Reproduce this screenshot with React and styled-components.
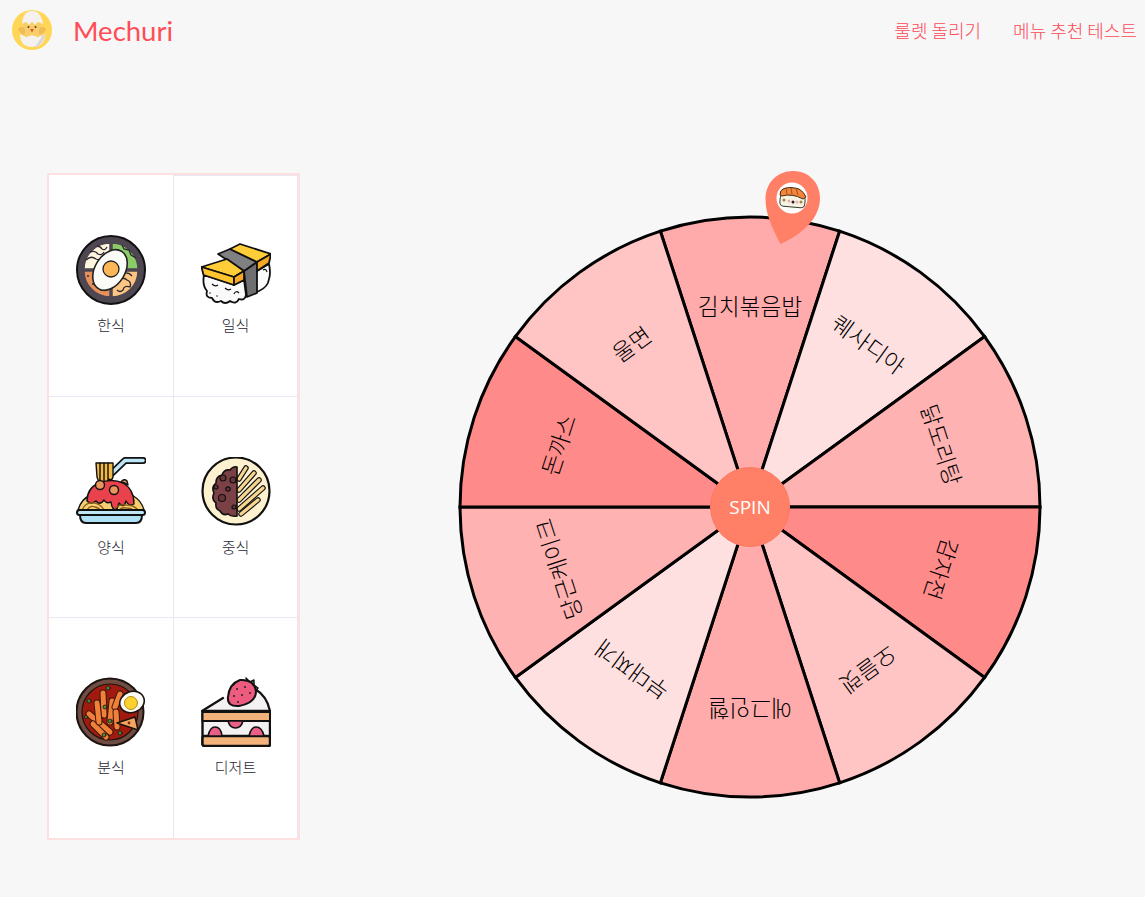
import styled, { createGlobalStyle } from "styled-components";

const GlobalStyle = createGlobalStyle`
  html, body {
    margin: 0;
    padding: 0;
    background: #f7f7f7;
  }
  body {
    font-family: "Noto Sans CJK KR", "Noto Sans", sans-serif;
  }
`;

const Page = styled.div`
  width: 1145px;
  height: 897px;
  overflow: hidden;
`;

const Header = styled.header`
  height: 60px;
  padding: 0 8px 0 12px;
  box-sizing: border-box;
  display: flex;
  align-items: center;
  justify-content: space-between;
`;

const Brand = styled.div`
  display: flex;
  align-items: center;
  gap: 21px;
`;

const BrandName = styled.span`
  font-family: "Lato", sans-serif;
  font-size: 27.5px;
  color: #ff4d58;
`;

const Nav = styled.nav`
  display: flex;
  gap: 32px;
`;

const NavLink = styled.a`
  font-size: 18px;
  font-weight: 300;
  color: #ff4757;
`;

const Main = styled.main`
  display: flex;
  align-items: center;
  gap: 157px;
  padding: 113px 0 0 47px;
`;

const Panel = styled.section`
  width: 253px;
  height: 667px;
  box-sizing: border-box;
  border: 2px solid #ffe0e0;
  background: #fff;
  display: grid;
  grid-template-columns: 125px 124px;
  grid-template-rows: 222px 221px 220px;
`;

const Category = styled.div`
  box-sizing: border-box;
  padding-top: 60px;
  display: flex;
  flex-direction: column;
  align-items: center;
  gap: 10px;
  border-bottom: 1px solid #e6e9f2;
  &:nth-child(odd) {
    border-right: 1px solid #e6e9f2;
  }
  &:nth-child(n + 5) {
    border-bottom: none;
    padding-top: 59px;
  }
  &:nth-child(2) {
    border-top: 1px solid #e6e9f2;
    padding-top: 59px;
  }
  &:nth-child(even) {
    border-right: 1px solid #e6e9f2;
  }
`;

const CategoryLabel = styled.span`
  font-size: 15px;
  line-height: 20px;
  font-weight: 300;
  color: #1f2733;
`;

const WheelBox = styled.div`
  position: relative;
  width: 586px;
  height: 586px;
`;

const WheelLabel = styled.text`
  font-family: "Noto Sans CJK KR", sans-serif;
  font-size: 22.7px;
  font-weight: 300;
  fill: #000;
  text-anchor: middle;
  dominant-baseline: central;
`;

const SpinButton = styled.button`
  position: absolute;
  left: 253px;
  top: 253px;
  width: 80px;
  height: 80px;
  padding: 0;
  border: 1px solid #fb7a62;
  border-radius: 50%;
  background: #ff8066;
  color: #fff;
  font-family: "Open Sans", sans-serif;
  font-size: 19px;
`;

const PinMark = styled.svg`
  position: absolute;
  left: 306px;
  top: -45px;
`;

const Logo = () => (
  <svg width="40" height="40" viewBox="0 0 40 40">
    <circle cx="20" cy="20" r="20" fill="#ffd655" />
    <path d="M10 14 Q11 1 20 1 Q29 1 31 14 L26 12 L23 15 L20 12 L17 15 L14 12 Z" fill="#f4f1ee" />
    <path d="M8 24 Q8 37 20 37 Q33 37 33 24 L26 27 L20 25 L14 27 Z" fill="#f4f1ee" />
    <path d="M27 31 Q25 36 20 37 Q31 37 33 24 L30 25 Q30 28 27 31 Z" fill="#d9d6d4" />
    <path d="M11 14 L14 12 L17 15 L20 12 L23 15 L26 12 L29 14 L30 24 L26 27 L20 25 L14 27 L10 24 Z" fill="#f9cd69" />
    <path d="M6 19 Q9 15 13 19 L13 24 Q9 26 6 19 Z M34 19 Q31 15 27 19 L27 24 Q31 26 34 19 Z" fill="#f1bb55" />
    <circle cx="16.5" cy="17" r="1" fill="#5a3b22" />
    <circle cx="23.5" cy="17" r="1" fill="#5a3b22" />
    <path d="M18 19 L22 19 L20 22.5 Z" fill="#e4572e" />
  </svg>
);

const BibimbapIcon = () => (
  <svg width="70" height="70" viewBox="0 0 70 70">
    <circle cx="35" cy="35" r="34" fill="#4e4650" stroke="#111" strokeWidth="2" />
    <g stroke="#4e4650" strokeWidth="1.5">
      <path d="M34 34 L8 34 A26 26 0 0 1 34 8 Z" fill="#fff6dd" />
      <path d="M36 34 L36 8 A26 26 0 0 1 62 34 Z" fill="#8bcb68" />
      <path d="M34 36 L34 62 A26 26 0 0 1 8 36 Z" fill="#e6905c" />
      <path d="M36 36 L62 36 A26 26 0 0 1 36 62 Z" fill="#fdc582" />
    </g>
    <g fill="none" stroke="#2b2730" strokeWidth="1.3">
      <path d="M10 25 Q15 20 20 24 Q24 26 26 22" />
      <path d="M14 17 Q19 15 22 19 Q26 21 28 17" />
      <path d="M21 11 Q24 11 26 14 Q29 16 31 12" />
      <path d="M46 10 L48 14 L53 15 L55 20 L60 23" />
      <path d="M42 46 Q47 41 51 45 Q56 47 54 52 Q48 50 47 55 Q44 58 41 55" />
      <path d="M48 38 Q53 37 56 41" />
    </g>
    <g fill="#3a2a24">
      <circle cx="12" cy="41" r="1" />
      <circle cx="17" cy="49" r="1" />
      <circle cx="25" cy="55" r="1" />
      <circle cx="28" cy="46" r="1" />
    </g>
    <ellipse cx="34" cy="35" rx="15" ry="22" transform="rotate(32 34 35)" fill="#fbfbf7" stroke="#222" strokeWidth="1.6" />
    <circle cx="35" cy="34" r="8" fill="#fbb657" stroke="#222" strokeWidth="1.3" />
  </svg>
);

const SushiIcon = () => (
  <svg width="70" height="70" viewBox="0 0 70 70" strokeLinejoin="round">
    <g stroke="#111" strokeWidth="1.8">
      <path d="M56 36 L68 29 Q70 38 68 44 Q67 52 58 56 L46 61 Z" fill="#fafafa" />
      <path d="M43 36 L56 27 L56 58 L46 62 Z" fill="#6f6f72" />
      <path d="M17 19 L29 14 L56 27 L43 36 Z" fill="#808082" />
      <path d="M29 14 L39 9 L70 19 L56 27 Z" fill="#ffcd38" />
      <path d="M56 27 L70 19 L68 28 L56 36 Z" fill="#f9a825" />
      <path d="M3 40 L33 50 L43 45 L45 60 Q44 66 38 64 Q35 70 29 66 Q24 70 20 66 Q14 69 11 63 Q4 63 6 56 Q1 50 3 40 Z" fill="#fafafa" />
      <path d="M0.5 32 L26 24 L43 36 L33 42 Z" fill="#ffcd38" />
      <path d="M0.5 32 L33 42 L33 50 L2.5 40 Z" fill="#ffc42e" />
      <path d="M33 42 L43 36 L43 45 L33 50 Z" fill="#f9a825" />
    </g>
    <g fill="none" stroke="#111" strokeWidth="1.2">
      <path d="M11 49 Q14 52 17 50" />
      <path d="M24 53 Q27 56 30 54" />
      <path d="M33 59 Q35 55 38 58" />
      <path d="M62 35 Q65 33 66 37" />
    </g>
    <g fill="#222">
      <circle cx="9" cy="58" r="0.8" />
      <circle cx="16" cy="61" r="0.8" />
    </g>
  </svg>
);

const PastaIcon = () => (
  <svg width="70" height="70" viewBox="0 0 70 70" strokeLinejoin="round" strokeLinecap="round">
    <path d="M36 16 L49 3.5 L67 3.5" fill="none" stroke="#111" strokeWidth="7" />
    <path d="M36 16 L49 3.5 L67 3.5" fill="none" stroke="#bfe6f7" strokeWidth="3.6" />
    <g stroke="#111" strokeWidth="1.4">
      <path d="M20 6 L37 6 L37 20 Q36 24 33 22 L33 26 L24 28 L21 20 Z" fill="#f5b945" />
      <path d="M24 6 L24 26 M28 6 L28 26 M32 6 L32 24" fill="none" />
      <path d="M2 53 Q5 42 15 38 L56 38 Q66 44 68 53 Z" fill="#f6cf70" />
      <path d="M11 44 Q11 31 23 26 Q36 21 47 26 Q58 32 58 47 Q53 50 50 44 Q48 52 43 46 L41 52 Q36 54 35 45 Q30 47 28 43 Q24 49 20 44 Q15 48 11 44 Z" fill="#e9424d" />
    </g>
    <g fill="none" stroke="#8a5c1a" strokeWidth="1.3">
      <path d="M6 53 Q10 44 19 46 Q26 48 28 53" />
      <path d="M11 53 Q14 48 19 50 Q23 51 24 53" />
      <path d="M38 53 Q42 47 50 48 Q58 48 62 53" />
      <path d="M43 53 Q46 50 50 51 Q55 51 57 53" />
    </g>
    <g fill="#e8965b" stroke="#111" strokeWidth="1.4">
      <circle cx="24" cy="28" r="4.5" />
      <circle cx="38" cy="33" r="4.5" />
      <path d="M45 25 Q48 21 51 24 L52 28 Q48 25 45 25 Z" />
    </g>
    <rect x="1" y="53" width="68" height="5" rx="2.5" fill="#bfe6f7" stroke="#111" strokeWidth="2" />
    <path d="M4 58 L66 58 Q66 66 60 66 L10 66 Q4 66 4 58 Z" fill="#aee0f6" stroke="#111" strokeWidth="2" />
  </svg>
);

const noodleLines = [
  "M38 22 L45 11",
  "M38 33 L53 16",
  "M38 43 L58 23",
  "M38 52 L62 31",
  "M40 57 L57 43",
];

const JajangIcon = () => (
  <svg width="70" height="70" viewBox="0 0 70 70" strokeLinecap="round">
    <circle cx="35" cy="34" r="33.5" fill="#fdf1d0" stroke="#111" strokeWidth="2.2" />
    <g fill="none" stroke="#111" strokeWidth="5.5">
      {noodleLines.map((d) => (
        <path key={d} d={d} />
      ))}
    </g>
    <g fill="none" stroke="#f7d68f" strokeWidth="3.2">
      {noodleLines.map((d) => (
        <path key={d} d={d} />
      ))}
    </g>
    <path d="M36 10 L36 59 Q30 60 27 57 Q22 59 19 54 Q14 52 15 46 Q10 42 13 36 Q10 30 15 26 Q15 19 21 18 Q23 12 29 13 Q32 9 36 10 Z" fill="#7b4146" stroke="#111" strokeWidth="1.6" />
    <g fill="#6a3539" stroke="#111" strokeWidth="1.2">
      <circle cx="22" cy="21" r="3" />
      <circle cx="32" cy="23" r="3" />
      <circle cx="15" cy="30" r="2" />
      <circle cx="27" cy="32" r="2.2" />
      <circle cx="21" cy="41" r="3.5" />
      <circle cx="33" cy="50" r="2" />
    </g>
  </svg>
);

const stickData = [
  [13, 37, 34, 55],
  [17, 47, 30, 60],
  [27, 16, 28, 38],
  [21, 26, 23, 45],
  [36, 24, 34, 45],
  [44, 17, 39, 30],
  [40, 35, 41, 50],
];

const TteokbokkiIcon = () => (
  <svg width="70" height="70" viewBox="0 0 70 70" strokeLinecap="round" strokeLinejoin="round">
    <circle cx="34" cy="35" r="33.5" fill="#6f4d42" stroke="#1d1310" strokeWidth="2" />
    <circle cx="34" cy="35" r="28" fill="#a01a10" stroke="#1d1310" strokeWidth="1.2" />
    {stickData.map(([x1, y1, x2, y2]) => (
      <g key={`${x1}-${y1}`}>
        <line x1={x1} y1={y1} x2={x2} y2={y2} stroke="#3d1808" strokeWidth="7" />
        <line x1={x1} y1={y1} x2={x2} y2={y2} stroke="#f0813a" strokeWidth="5" />
      </g>
    ))}
    <g fill="#4f8a3a" stroke="#1d1310" strokeWidth="0.8">
      <circle cx="13" cy="24" r="2" />
      <circle cx="32" cy="11" r="2" />
      <circle cx="29" cy="30" r="2" />
      <circle cx="34" cy="44" r="2" />
      <circle cx="28" cy="58" r="2" />
      <circle cx="44" cy="56" r="2" />
      <circle cx="10" cy="40" r="1.6" />
    </g>
    <path d="M41 46 L59 40 L62 53 Z" fill="#f6a55f" stroke="#1d1310" strokeWidth="1.5" />
    <circle cx="53" cy="46" r="1.4" fill="#7a2a10" />
    <ellipse cx="56" cy="25" rx="12.5" ry="10.5" transform="rotate(-20 56 25)" fill="#fbfbf5" stroke="#1d1310" strokeWidth="1.6" />
    <circle cx="55" cy="26" r="6.5" fill="#fcd02f" stroke="#b78a10" strokeWidth="1" />
  </svg>
);

const CakeIcon = () => (
  <svg width="70" height="70" viewBox="0 0 70 70" strokeLinejoin="round" strokeLinecap="round">
    <path d="M2 34 L24 20 L48 8 Q66 16 69 33 L69 34 Z" fill="#f4f1f3" />
    <path d="M1 34 L22 21 M54 12 Q66 19 69 34" fill="none" stroke="#111" strokeWidth="2.2" />
    <rect x="1.5" y="34" width="67.5" height="35" rx="2" fill="#f4f1f3" stroke="#111" strokeWidth="2.4" />
    <rect x="1.5" y="35" width="67.5" height="9" fill="#f3b27a" stroke="#111" strokeWidth="2" />
    <rect x="1.5" y="59" width="67.5" height="10" rx="2" fill="#f3b27a" stroke="#111" strokeWidth="2.4" />
    <g fill="#ea5f86" stroke="#111" strokeWidth="1.6">
      <path d="M7 59 Q9 50 14 50 Q20 50 21 59 Z" />
      <path d="M48 59 Q50 50 55 50 Q61 50 63 59 Z" />
      <path d="M27 44 L42 44 Q40 51 34.5 51 Q29 51 27 44 Z" />
    </g>
    <path d="M45 1 L49 5 L53 3 L53 8 L57 11 L54 15 L50 13 Z" fill="#74c064" stroke="#111" strokeWidth="1.4" />
    <path d="M39 3 Q53 2 55 14 Q55 26 38 29 Q26 30 27 20 Q28 7 39 3 Z" fill="#ed5b7e" stroke="#111" strokeWidth="2" />
    <g fill="#222">
      <circle cx="36" cy="12" r="1" />
      <circle cx="44" cy="10" r="1" />
      <circle cx="33" cy="19" r="1" />
      <circle cx="41" cy="18" r="1" />
      <circle cx="49" cy="16" r="1" />
      <circle cx="37" cy="25" r="1" />
    </g>
  </svg>
);

const Pin = () => (
  <PinMark width="60" height="78" viewBox="0 0 60 78">
    <path
      d="M2.5 30 C2.5 14 14 2 30 2 C46 2 57 14 57 29 C57 50 38 66 17.5 75 C10 60 2.5 46 2.5 30 Z"
      fill="#ff8066"
    />
    <circle cx="29" cy="29" r="15.5" fill="#fff" />
    <rect x="17" y="26" width="25" height="12" rx="4" transform="rotate(5 29 32)" fill="#f7f3e3" stroke="#3a3a2a" strokeWidth="1" />
    <path d="M17 26 Q17 21 20 20 L23 19 L27 18.5 L32 19 L36 20 Q41 23 43 28 L40 30 Q29 24 19 27 Z" fill="#f5853a" stroke="#4a2a10" strokeWidth="1" />
    <path d="M23 19 L24 25 M28 19 L29 25 M33 19 L35 26" fill="none" stroke="#8a4a18" strokeWidth="0.8" />
    <g>
      <circle cx="21" cy="31" r="1.5" fill="#9a8a40" />
      <circle cx="26" cy="32" r="1.5" fill="#f3a9b8" />
      <circle cx="30" cy="33" r="1.5" fill="#222" />
      <circle cx="34" cy="33" r="1.5" fill="#f3a9b8" />
      <circle cx="38" cy="33" r="1.5" fill="#9a8a40" />
    </g>
  </PinMark>
);

const categories = [
  { name: "한식", Icon: BibimbapIcon },
  { name: "일식", Icon: SushiIcon },
  { name: "양식", Icon: PastaIcon },
  { name: "중식", Icon: JajangIcon },
  { name: "분식", Icon: TteokbokkiIcon },
  { name: "디저트", Icon: CakeIcon },
];

const slices = [
  { name: "김치볶음밥", color: "#ffabab" },
  { name: "퀘사디아", color: "#ffe0e0" },
  { name: "닭도리탕", color: "#ffb2b2" },
  { name: "감자전", color: "#ff8a8a" },
  { name: "오믈렛", color: "#ffc5c5" },
  { name: "에그인헬", color: "#ffabab" },
  { name: "부대찌개", color: "#ffe0e0" },
  { name: "당근케이크", color: "#ffb2b2" },
  { name: "돈까스", color: "#ff8a8a" },
  { name: "울면", color: "#ffc5c5" },
];

const CENTER = 293;
const RADIUS = 290;

function slicePath(index) {
  const toPoint = (deg) => {
    const rad = ((deg - 90) * Math.PI) / 180;
    return `${CENTER + RADIUS * Math.cos(rad)} ${CENTER + RADIUS * Math.sin(rad)}`;
  };
  const mid = index * 36;
  return `M${CENTER} ${CENTER} L${toPoint(mid - 18)} A${RADIUS} ${RADIUS} 0 0 1 ${toPoint(mid + 18)} Z`;
}

function App() {
  return (
    <Page>
      <GlobalStyle />
      <Header>
        <Brand>
          <Logo />
          <BrandName>Mechuri</BrandName>
        </Brand>
        <Nav>
          <NavLink>룰렛 돌리기</NavLink>
          <NavLink>메뉴 추천 테스트</NavLink>
        </Nav>
      </Header>
      <Main>
        <Panel>
          {categories.map(({ name, Icon }) => (
            <Category key={name}>
              <Icon />
              <CategoryLabel>{name}</CategoryLabel>
            </Category>
          ))}
        </Panel>
        <WheelBox>
          <svg width="586" height="586" viewBox="0 0 586 586">
            {slices.map((slice, i) => (
              <path
                key={slice.name}
                d={slicePath(i)}
                fill={slice.color}
                stroke="#000"
                strokeWidth="3"
              />
            ))}
            {slices.map((slice, i) => (
              <WheelLabel
                key={slice.name}
                x={CENTER}
                y={CENTER - 202}
                transform={`rotate(${i * 36} ${CENTER} ${CENTER})`}
              >
                {slice.name}
              </WheelLabel>
            ))}
          </svg>
          <Pin />
          <SpinButton>SPIN</SpinButton>
        </WheelBox>
      </Main>
    </Page>
  );
}

export default App;
